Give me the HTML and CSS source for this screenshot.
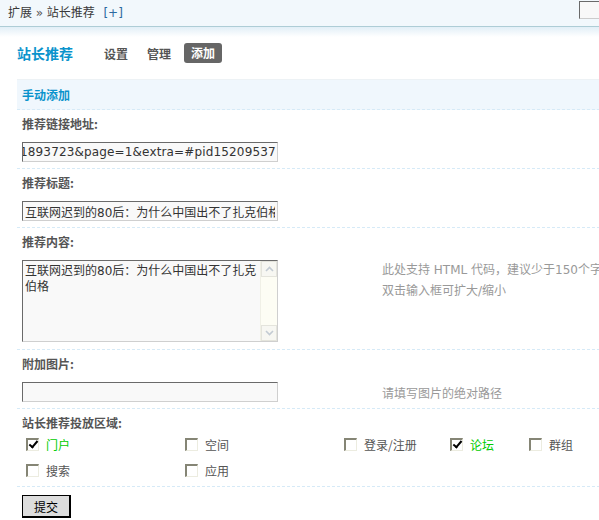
FILE: index.html
```html
<!DOCTYPE html>
<html lang="zh-CN">
<head>
<meta charset="utf-8">
<title>站长推荐</title>
<link rel="stylesheet" href="styles.css">
</head>
<body>
<div class="topbar">
  <div class="crumb">扩展 <span class="sep">»</span> 站长推荐 <a class="add">[+]</a></div>
  <input class="topsearch" type="text">
</div>
<div class="shade"></div>
<div class="main">
  <div class="titlerow">
    <h3 class="title">站长推荐</h3>
    <a class="tab tab-set">设置</a>
    <a class="tab tab-mgr">管理</a>
    <a class="tab on">添加</a>
  </div>
  <div class="table">
    <div class="hdr">手动添加</div>

    <div class="lbl">推荐链接地址:</div>
    <div class="row">
      <div class="field"><input class="inp url" type="text" value="1893723&amp;page=1&amp;extra=#pid15209537"></div>
      <div class="help"></div>
    </div>

    <div class="lbl">推荐标题:</div>
    <div class="row">
      <div class="field"><input class="inp" type="text" value="互联网迟到的80后：为什么中国出不了扎克伯格"></div>
      <div class="help"></div>
    </div>

    <div class="lbl">推荐内容:</div>
    <div class="row row-ta">
      <div class="field">
        <div class="ta">
          <div class="ta-text">互联网迟到的80后：为什么中国出不了扎克伯格</div>
          <div class="ta-bar">
            <span class="ta-btn"><svg width="9" height="6" viewBox="0 0 9 6"><path d="M1 5 L4.5 1.5 L8 5" fill="none" stroke="#c3cbd3" stroke-width="1.6"/></svg></span>
            <span class="ta-btn"><svg width="9" height="6" viewBox="0 0 9 6"><path d="M1 1 L4.5 4.5 L8 1" fill="none" stroke="#c3cbd3" stroke-width="1.6"/></svg></span>
          </div>
        </div>
      </div>
      <div class="help help-top">此处支持 HTML 代码，建议少于150个字符<br>双击输入框可扩大/缩小</div>
    </div>

    <div class="lbl">附加图片:</div>
    <div class="row">
      <div class="field"><input class="inp" type="text" value=""></div>
      <div class="help">请填写图片的绝对路径</div>
    </div>

    <div class="lbl">站长推荐投放区域:</div>
    <div class="row row-areas">
      <div class="areas">
        <label class="area"><input type="checkbox" checked><span class="on-text">门户</span></label>
        <label class="area"><input type="checkbox"><span>空间</span></label>
        <label class="area"><input type="checkbox"><span>登录/注册</span></label>
        <label class="area"><input type="checkbox" checked><span class="on-text">论坛</span></label>
        <label class="area"><input type="checkbox"><span>群组</span></label>
        <label class="area"><input type="checkbox"><span>搜索</span></label>
        <label class="area"><input type="checkbox"><span>应用</span></label>
      </div>
    </div>

    <div class="submitrow"><button class="btn" type="button">提交</button></div>
  </div>
</div>
</body>
</html>
```

FILE: styles.css
```css
html, body {
  margin: 0;
  padding: 0;
  overflow: hidden;
  background: #fff;
}
body {
  width: 700px;
  font: 12px "DejaVu Sans", "Noto Sans CJK SC", sans-serif;
  color: #333;
}

/* top bar */
.topbar {
  display: flex;
  align-items: flex-start;
  height: 26px;
  background: #f2f8fc;
  border-bottom: 1px solid #aecdd6;
}
.crumb {
  padding-left: 8px;
  line-height: 24px;
  color: #3a3a3a;
  font-family: "Noto Sans CJK SC", sans-serif;
}
.crumb .sep {
  color: #555;
  font-family: "DejaVu Sans", sans-serif;
  margin: 0 1px;
}
.crumb .add {
  color: #2c6aa0;
  margin-left: 6px;
  font-family: "DejaVu Sans", sans-serif;
}
.topsearch {
  margin-left: auto;
  margin-top: 1px;
  width: 121px;
  height: 18px;
  box-sizing: border-box;
  border: 1px solid;
  border-color: #6a6a6a #cccccc #cccccc #6a6a6a;
  background: #f8f8f8;
  padding: 0;
}
.shade {
  height: 10px;
  background: linear-gradient(#e2eff7, #ffffff);
}

/* title row */
.main {
  padding-left: 17px;
}
.titlerow {
  display: flex;
  align-items: center;
  height: 20px;
  margin-top: 6px;
}
.title {
  margin: 0;
  width: 87px;
  font-size: 14px;
  font-weight: bold;
  color: #0a93cc;
  font-family: "Noto Sans CJK SC", sans-serif;
}
.tab {
  font-weight: bold;
  color: #555;
  font-family: "Noto Sans CJK SC", sans-serif;
}
.tab-set { margin-right: 19px; }
.tab-mgr { margin-right: 13px; }
.tab.on {
  background: #666;
  color: #fff;
  padding: 0 7px;
  height: 20px;
  line-height: 20px;
  border-radius: 3px;
}

/* form table */
.table {
  margin-top: 16px;
  border-top: 1px solid #edf2f5;
}
.hdr {
  height: 29px;
  line-height: 29px;
  padding-left: 5px;
  background: #f0f7fd;
  color: #0a93cc;
  font-weight: bold;
  font-family: "Noto Sans CJK SC", sans-serif;
  border-bottom: 1px dashed #d6eaf7;
}
.lbl {
  height: 28px;
  line-height: 28px;
  padding-left: 5px;
  font-weight: bold;
  color: #555;
  font-family: "Noto Sans CJK SC", sans-serif;
}
.row {
  display: flex;
  align-items: center;
  padding: 4px 0 6px 5px;
  border-bottom: 1px dashed #d6eaf7;
}
.row-ta {
  align-items: flex-start;
  padding-bottom: 7px;
}
.field {
  width: 360px;
  flex: none;
}
.help {
  color: #999;
  font-family: "DejaVu Sans", "Noto Sans CJK SC", sans-serif;
  white-space: nowrap;
}
.help-top {
  line-height: 21px;
  padding-top: 0;
}

.inp {
  display: block;
  width: 256px;
  height: 20px;
  box-sizing: border-box;
  margin: 0;
  padding: 0 2px;
  border: 1px solid;
  border-color: #6a6a6a #cfcfcf #cfcfcf #6a6a6a;
  background: #f9f9f9;
  color: #333;
  font: 12px "DejaVu Sans", "Noto Sans CJK SC", sans-serif;
}
.inp.url {
  padding: 0;
  text-indent: -3px;
  letter-spacing: 0.15px;
}

/* fake textarea */
.ta {
  display: flex;
  width: 256px;
  height: 82px;
  box-sizing: border-box;
  border: 1px solid;
  border-color: #6a6a6a #cfcfcf #cfcfcf #6a6a6a;
  background: #f9f9f9;
}
.ta-text {
  flex: 1;
  padding: 2px 0 0 2px;
  line-height: 16px;
  color: #333;
  overflow: hidden;
}
.ta-bar {
  flex: none;
  width: 16px;
  display: flex;
  flex-direction: column;
  justify-content: space-between;
  background: #fdfdf4;
  border-left: 1px solid #f0f0e6;
}
.ta-btn {
  display: flex;
  align-items: center;
  justify-content: center;
  height: 16px;
  box-sizing: border-box;
  border: 1px solid #e4e4dc;
  background: #f7f7f2;
}

/* areas */
.row-areas {
  padding: 0 0 3px 9px;
  margin-top: -6px;
}
.areas {
  display: grid;
  grid-template-columns: 159px 159px 106px 79px 80px;
  grid-auto-rows: 26px;
}
.area {
  display: flex;
  align-items: center;
  color: #555;
  font-family: "Noto Sans CJK SC", sans-serif;
  white-space: nowrap;
}
.area .on-text {
  color: #00cc00;
}
.area input {
  -webkit-appearance: none;
  appearance: none;
  position: relative;
  width: 13px;
  height: 13px;
  margin: 0 7px 0 0;
  box-sizing: border-box;
  border-style: solid;
  border-width: 2px 1px 1px 2px;
  border-color: #858575 #ecece0 #ecece0 #858575;
  background: #fff;
}
.area input:checked::after {
  content: "";
  position: absolute;
  left: 3px;
  top: -1px;
  width: 3px;
  height: 7px;
  border: solid #000;
  border-width: 0 2px 2px 0;
  transform: rotate(40deg);
}

/* submit */
.submitrow {
  padding: 8px 0 0 5px;
}
.btn {
  width: 49px;
  height: 23px;
  box-sizing: border-box;
  margin: 0;
  padding: 0;
  background: #dddddd;
  border-style: solid;
  border-color: #000;
  border-width: 1px 2px 2px 1px;
  color: #000;
  font: 12px "Noto Sans CJK SC", sans-serif;
}
```
